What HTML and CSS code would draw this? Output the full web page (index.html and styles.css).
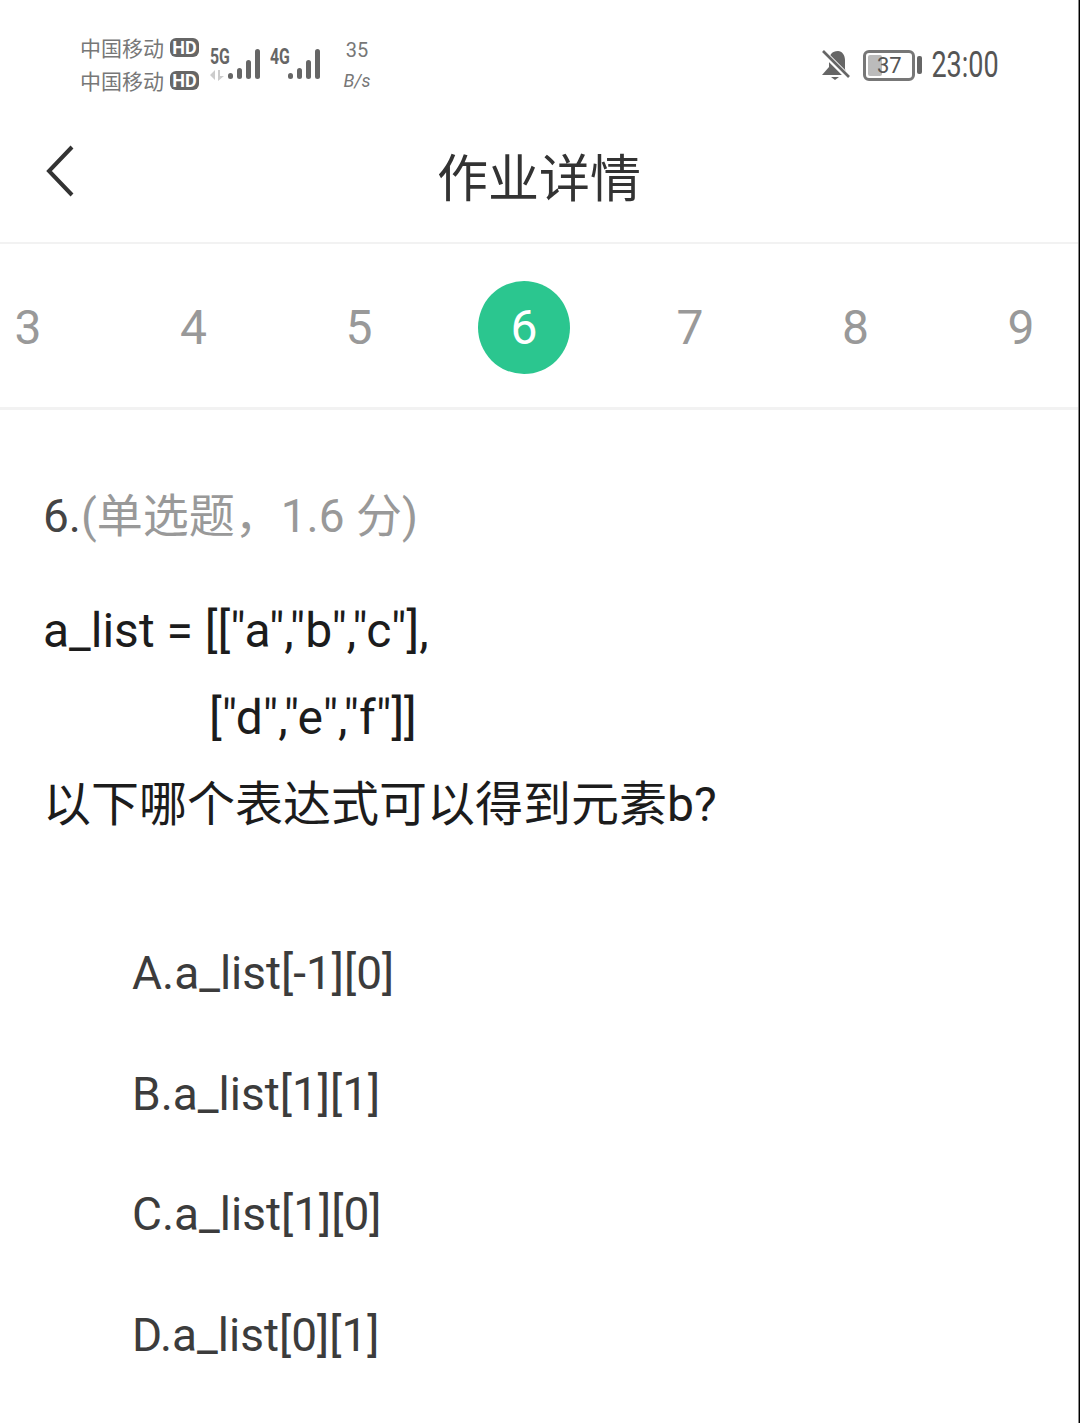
FILE: index.html
```html
<!DOCTYPE html>
<html lang="zh">
<head>
<meta charset="utf-8">
<title>作业详情</title>
<link rel="stylesheet" href="styles.css">
</head>
<body>
<div class="status">
  <div class="carriers">
    <div class="carrier"><span>中国移动</span><b class="hd">HD</b></div>
    <div class="carrier"><span>中国移动</span><b class="hd">HD</b></div>
  </div>
  <div class="signal">
    <div class="net"><b>5G</b><svg class="arrows" width="16" height="12" viewBox="0 0 16 12"><path d="M0 6l5-5v10zM8 1h2v6h4l-6 5z" fill="#ccc"/></svg></div>
    <svg class="bars" width="33" height="32" viewBox="0 0 33 32"><g fill="#666"><rect x="0" y="24" width="5" height="6" rx="2.5"/><rect x="9" y="19" width="5" height="11" rx="2.5"/><rect x="18" y="11" width="5" height="19" rx="2.5"/><rect x="27" y="0" width="5" height="30" rx="2.5"/></g></svg>
  </div>
  <div class="signal">
    <div class="net"><b>4G</b></div>
    <svg class="bars" width="33" height="32" viewBox="0 0 33 32"><g fill="#666"><rect x="0" y="24" width="5" height="6" rx="2.5"/><rect x="9" y="19" width="5" height="11" rx="2.5"/><rect x="18" y="11" width="5" height="19" rx="2.5"/><rect x="27" y="0" width="5" height="30" rx="2.5"/></g></svg>
  </div>
  <div class="speed"><span>35</span><span class="unit">B/s</span></div>
  <div class="right">
    <svg class="bell" width="32" height="32" viewBox="0 0 32 32"><path d="M18 2c-6 0-9 4-9 10v6l-7 8h25l-2-6V11c0-5-3-9-7-9z" fill="#666"/><path d="M11 28h8l-4 3z" fill="#666"/><path d="M3 3l26 26" stroke="#fff" stroke-width="6"/><path d="M3 2l26 26" stroke="#666" stroke-width="2.6"/></svg>
    <div class="battery"><div class="level"></div><span>37</span></div>
    <div class="cap"></div>
    <span class="time">23:00</span>
  </div>
</div>
<header class="nav">
  <svg class="back" width="32" height="52" viewBox="0 0 32 52"><path d="M28 2L5 26l23 24" fill="none" stroke="#333" stroke-width="4"/></svg>
  <h1>作业详情</h1>
</header>
<nav class="tabs">
  <span class="tab">3</span>
  <span class="tab">4</span>
  <span class="tab">5</span>
  <span class="tab on">6</span>
  <span class="tab">7</span>
  <span class="tab">8</span>
  <span class="tab">9</span>
</nav>
<main class="content">
  <p class="qhead">6.<span>(单选题，1.6 分)</span></p>
  <p class="qline">a_list = [["a","b","c"],</p>
  <p class="qline indent">["d","e","f"]]</p>
  <p class="qline">以下哪个表达式可以得到元素b?</p>
  <ul class="opts">
    <li>A.a_list[-1][0]</li>
    <li>B.a_list[1][1]</li>
    <li>C.a_list[1][0]</li>
    <li>D.a_list[0][1]</li>
  </ul>
</main>
</body>
</html>
```
FILE: styles.css
```css
* { box-sizing: border-box; }
html, body { margin: 0; padding: 0; background: #fff; }
body { width: 1080px; height: 1423px; overflow: hidden; padding-right: 1px; border-right: 1px solid #000; box-shadow: inset -1px 0 0 #888; font-family: Roboto, "Noto Sans CJK SC", sans-serif; }
p, ul, h1 { margin: 0; padding: 0; }

.status { height: 122px; display: flex; align-items: flex-start; padding: 33px 79px 0 80px; color: #666; }
.carriers { display: flex; flex-direction: column; gap: 5px; width: 130px; flex: none; }
.carrier { display: flex; align-items: center; height: 28px; gap: 6px; font: 21px/28px "Noto Sans CJK SC", sans-serif; color: #777; }
.hd { background: #666; color: #fff; font: 700 18px/19px Roboto, sans-serif; border-radius: 6px; width: 29px; text-align: center; }
.signal { display: flex; align-items: flex-start; width: 60px; flex: none; margin-top: 15px; }
.net { display: flex; flex-direction: column; width: 18px; flex: none; font-size: 22px; line-height: 18px; }
.net b { color: #666; white-space: nowrap; transform: scaleX(.72); transform-origin: left center; }
.bars { flex: none; margin-top: 1px; }
.arrows { margin-top: 3px; }
.speed { display: flex; flex-direction: column; align-items: center; gap: 7px; width: 40px; margin-left: 7px; margin-top: 5px; font-size: 20px; line-height: 24px; color: #777; flex: none; }
.unit { font-size: 18px; font-style: italic; }
.right { margin-left: auto; display: flex; align-items: center; height: 64px; }
.bell { margin-right: 11px; }
.battery { position: relative; width: 52px; height: 31px; border: 3px solid #777; border-radius: 6px; overflow: hidden; display: flex; align-items: center; justify-content: center; font-size: 22px; color: #555; }
.level { position: absolute; left: 2px; top: 2px; bottom: 2px; width: 14px; background: #bbb; border-radius: 2px; }
.battery span { position: relative; }
.cap { width: 5px; height: 18px; margin-left: 2px; background: #666; border-radius: 2px; }
.time { margin-left: -13px; font-size: 36px; color: #555; transform: scaleX(.75); transform-origin: right center; }

.nav { height: 122px; display: flex; align-items: center; justify-content: center; position: relative; border-bottom: 2px solid #f2f2f2; }
.back { position: absolute; left: 44px; top: 23px; }
.nav h1 { font: 400 51px/60px "Noto Sans CJK SC", sans-serif; color: #333; margin-top: -14px; }

.tabs { height: 166px; display: flex; gap: 113.5px; align-items: center; padding: 4px 0 0 2px; border-bottom: 3px solid #f2f2f2; }
.tab { width: 52px; height: 92px; flex: none; display: flex; align-items: center; justify-content: center; font-size: 48px; color: #999; }
.tab.on { width: 92px; height: 93px; border-radius: 50%; background: #2bc68f; color: #fff; margin: 0 -19px 0 -21px; padding-left: 1px; }

.content { padding: 76px 43px 0; color: #1c1c1c; font-size: 48px; }
.qhead { line-height: 60px; color: #444; font-size: 46px; margin-bottom: 41px; }
.qhead span { color: #999; }
.qline { line-height: 87px; }
.indent { padding-left: 166px; }
.opts { list-style: none; margin-top: 65px; padding-left: 89px; color: #3c3c3c; font-size: 46px; }
.opts li { height: 120.6px; line-height: 120.6px; }
```
